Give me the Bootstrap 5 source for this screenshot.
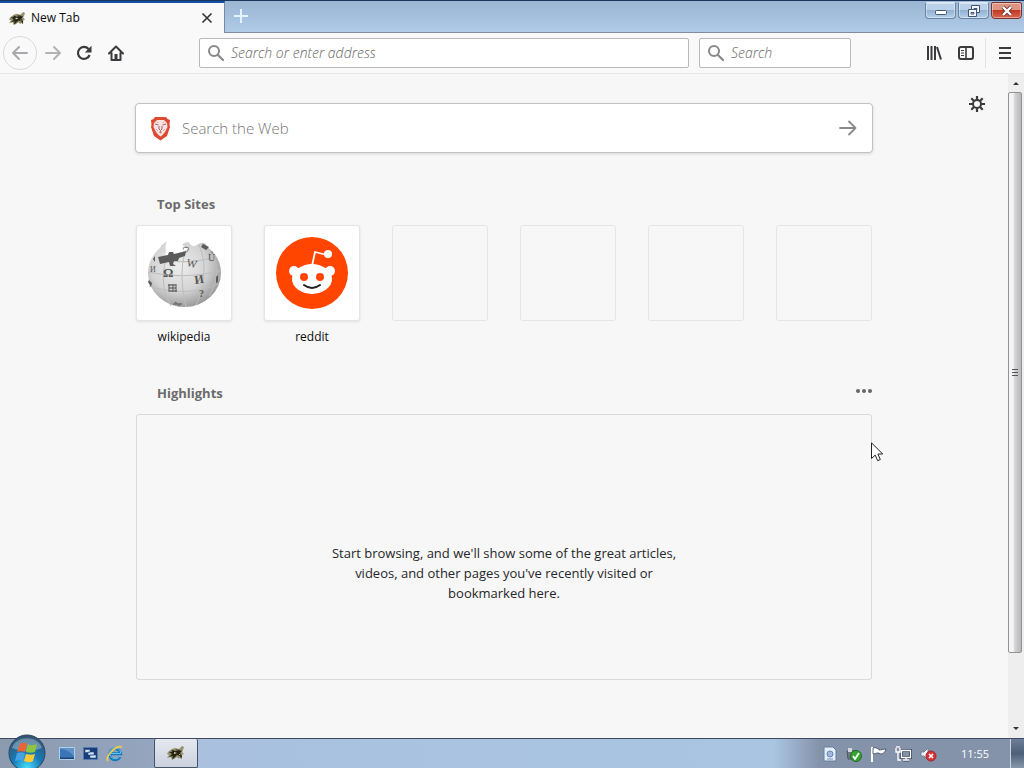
<!DOCTYPE html>
<html lang="en">
<head>
<meta charset="utf-8">
<meta name="viewport" content="width=device-width, initial-scale=1">
<title>New Tab</title>
<link href="https://cdn.jsdelivr.net/npm/bootstrap@5.3.0/dist/css/bootstrap.min.css" rel="stylesheet">
<style>
body{font-family:"Open Sans","Noto Sans",sans-serif;font-size:12px;line-height:20px;color:#0c0c0d;background:#f7f7f7}
svg{display:block;flex:none}
button,.tile-link{border:0;background:none;padding:0;color:inherit}
input::placeholder{color:#777;opacity:1}
input{border:0;background:none;outline:0;min-width:0;padding:0}
/* window frame */
.titlebar{height:33px;background:linear-gradient(#9bb5d2,#b0cce8);border-top:1px solid #1b365d}
.tab{width:225px;background:#f9f9fa;border-top:2px solid #1450a8;border-right:1px solid #7889a0;padding:0 11px 0 9px}
.tab span{padding-left:5px}
.tabspace{border-bottom:1px solid #818d9f;padding-left:9px}
.tabspace>button{align-self:flex-start;margin-top:8px}
.winbtns{gap:2px;padding:1px 2px 0 0}
.winbtn{width:31px;height:17px;border:1px solid #6784a5;border-top-color:#dcebf8;border-radius:2px 2px 4px 4px;background:linear-gradient(#b9d0e8 45%,#93b2d2 50%,#b4d0ea);box-shadow:inset 0 0 0 1px #ffffff66;display:flex;align-items:center;justify-content:center}
.winclose{background:linear-gradient(#df9482 45%,#c13b24 50%,#d9664d);border-color:#7c3030}
/* toolbar */
.toolbar{height:41px;background:#f9f9fa;border-bottom:1px solid #e6e6e7;color:#3b3b3d;padding:0 12px 0 3px}
.toolbar input{font-size:14px;font-style:italic;font-weight:300}
.toolbar input::placeholder{color:#666}
.backbtn{width:34px;height:34px;border:1px solid #d9d9da;border-radius:50%;color:#a9a9ab;display:flex;align-items:center;justify-content:center}
.fwdbtn{color:#b3b3b5;margin:0 14px 0 7px}
.field{height:30px;border:1px solid #b9b9ba;border-radius:2px;background:#fff;padding:0 7px;gap:6px;color:#888}
.urlfield{margin:0 10px 0 75px}
.searchfield{width:152px;margin-right:75px}
.tools button:nth-child(2){margin:0 11px 0 16px}
.tools .divider+button{margin-left:12px}
.divider{width:1px;height:30px;background:#e3e3e4}
/* new tab page */
.newtab{width:736px;max-width:100%;margin:0 auto}
.websearch{height:50px;margin:29px -1px 0;background:#fff;border:1px solid #c2c2c3;border-radius:4px;box-shadow:0 1px 3px #00000022;padding:0 15px 0 14px}
.websearch input{font-size:15px;font-weight:300;margin-left:11px}
h2{font-size:13px;line-height:20px;font-weight:700;color:#6b6b6c;margin:0;padding-left:21px}
.topsites{padding-top:41px}
.tiles{display:grid;grid-template-columns:repeat(6,96px);justify-content:space-between;padding-top:11px}
.tile{height:96px;border:1px solid #e5e5e6;border-radius:3px;display:flex;align-items:center;justify-content:center}
.tile-full{background:#fff;box-shadow:0 1px 3px #00000018;margin-bottom:6px}
.tile-link{color:#0c0c0d;text-align:center;text-decoration:none;font-size:12px}
.highlights{padding-top:36px}
.highlights button{padding-bottom:4px}
.empty{height:266px;border:1px solid #d9d9da;border-radius:3px;padding-top:51px;margin-top:11px}
.empty p{width:352px;font-size:13px;line-height:20px;text-align:center;margin:0;color:#26262a}
.gear{top:22px;right:23px;color:#3b3b3d}
.scroll{width:16px;background:#eeeeef;padding:1px 2px 1px 0}
.thumb{flex:563 0 0;border:1px solid #929294;border-radius:2px;background:linear-gradient(90deg,#f4f4f4 35%,#d2d2d3 50%,#b8b8ba)}
.rest{flex:67 0 0}
.pointer{left:871px;top:368px}
/* taskbar */
.taskbar{height:30px;border-top:1px solid #3d4a5f;background:linear-gradient(90deg,#8c9ab0 0,#94a5be 150px,#a9c1de 200px,#a9c5e2 calc(100% - 250px),#8593aa calc(100% - 205px),#8492aa)}
.orb{left:8px;bottom:-6px}
.quick{padding-left:59px;width:154px;gap:8px}
.task{width:44px;border:1px solid #45536a;border-top:0;border-radius:2px;background:linear-gradient(#e4e8f0,#cbd2de);display:flex;align-items:center;justify-content:center}
.tray{gap:8px;padding-right:3px}
.clock{color:#fff;width:70px;text-align:center;line-height:29px;font-size:11px}
.showdesk{width:14px;border-left:1px solid #cbd5e2;background:linear-gradient(#6d7f96,#4d6077 50%,#8797ac)}
</style>
</head>
<body class="d-flex flex-column vh-100 overflow-hidden">
<svg width="0" height="0" class="position-absolute" aria-hidden="true"><defs>
<symbol id="wasp" viewBox="0 0 18 16"><path d="M1 7 5 4l3-1 4 1 3-3 2 1-1 3-1 2 2 2-2 1v4l-2-2-1 2-2-2-3 2-2 1-1-3-4 1 2-3-2-1z" fill="#98916a"/><path d="m2 7 4-2 2 1 4-1 3 1-2 2 2 3-1 3-1-3-3-1-3 3-2 1 1-3-4 1 3-3z" fill="#25241b"/><path d="m8 4 5 1-2 1z" fill="#44402b"/><path d="m7 7 3 1-3 1zM3 6l2 0-1 1zM12 9l2 1-2 0z" fill="#ded7a2"/></symbol>
<symbol id="lens" viewBox="0 0 18 18"><circle cx="7" cy="7" r="5" fill="none" stroke="currentColor" stroke-width="2"/><path d="m11 11 5 5" stroke="currentColor" stroke-width="2.2" stroke-linecap="round"/></symbol>
</defs></svg>

<header class="titlebar d-flex flex-shrink-0">
  <div class="tab d-flex align-items-center">
    <svg width="17" height="15"><use href="#wasp"/></svg><span class="flex-grow-1">New Tab</span>
    <button aria-label="Close tab"><svg width="12" height="12" viewBox="0 0 12 12" stroke="#333" stroke-width="1.6"><path d="m1.500 1.500 9 9m0-9-9 9"/></svg></button>
  </div>
  <div class="tabspace d-flex flex-grow-1 justify-content-between">
    <button aria-label="New tab"><svg width="14" height="14" viewBox="0 0 14 14" stroke="#e4f4ff" stroke-width="2"><path d="M7 0v14M0 7h14"/></svg></button>
    <div class="winbtns d-flex">
      <button class="winbtn" aria-label="Minimize"><svg width="14" height="8" viewBox="0 0 14 8"><rect x="1.500" y="3.500" width="11" height="4" rx="1" fill="#fff" stroke="#42566f"/></svg></button>
      <button class="winbtn" aria-label="Restore"><svg width="14" height="12" viewBox="0 0 14 12" fill="#f4f8ff" stroke="#42566f"><path d="M4.500.5h8v7h-8zM7 3.500h3v1H7z"/><path d="M1.500 4.500h8v7h-8z"/><path d="M4 7.500h3v1.500H4z"/></svg></button>
      <button class="winbtn winclose" aria-label="Close window"><svg width="14" height="12" viewBox="0 0 14 12"><path d="m3 2 8 8m0-8-8 8" stroke="#6b3633" stroke-width="4"/><path d="m3 2 8 8m0-8-8 8" stroke="#fff" stroke-width="2.400"/></svg></button>
    </div>
  </div>
</header>

<nav class="toolbar d-flex flex-shrink-0 align-items-center" aria-label="Navigation">
  <button class="backbtn" aria-label="Back"><svg width="18" height="16" viewBox="0 0 18 16" fill="none" stroke="currentColor" stroke-width="2" stroke-linecap="round" stroke-linejoin="round"><path d="M16 8H2m6-6L2 8l6 6"/></svg></button>
  <button class="fwdbtn" aria-label="Forward"><svg width="18" height="16" viewBox="0 0 18 16" fill="none" stroke="currentColor" stroke-width="2" stroke-linecap="round" stroke-linejoin="round"><path d="M2 8h14m-6-6 6 6-6 6"/></svg></button>
  <button aria-label="Reload"><svg width="16" height="16" viewBox="0 0 16 16"><path d="M13.600 10A6 6 0 1 1 12.500 4" fill="none" stroke="currentColor" stroke-width="2.200"/><path d="M15.500.8v6.700H8.800z" fill="currentColor"/></svg></button>
  <button class="ms-3" aria-label="Home"><svg width="16" height="16" viewBox="0 0 16 16"><path d="M1 8.500 8 1.500l7 7M3.500 8v7h9V8" fill="none" stroke="currentColor" stroke-width="2" stroke-linecap="round" stroke-linejoin="round"/><path d="M6.500 14V9h3v5z" fill="currentColor"/></svg></button>
  <label class="field urlfield d-flex align-items-center flex-grow-1"><svg width="18" height="18"><use href="#lens"/></svg><input class="flex-grow-1" placeholder="Search or enter address" aria-label="Search or enter address"></label>
  <label class="field searchfield d-flex align-items-center"><svg width="18" height="18"><use href="#lens"/></svg><input class="flex-grow-1" placeholder="Search" aria-label="Search"></label>
  <div class="tools d-flex align-items-center">
    <button aria-label="Library"><svg width="16" height="14" viewBox="0 0 16 14" stroke="currentColor" stroke-width="2"><path d="M2 0v14M5.500 0v14M9 0v14M11 1l4 12.500"/></svg></button>
    <button aria-label="Sidebars"><svg width="16" height="14" viewBox="0 0 16 14" fill="none" stroke="currentColor"><rect x="1" y="1" width="14" height="12" rx="2" stroke-width="2"/><path d="M8 1v12" stroke-width="1.600"/><path d="M3 4.500h3M3 7h3M3 9.500h3"/></svg></button>
    <span class="divider"></span>
    <button aria-label="Menu"><svg width="14" height="14" viewBox="0 0 14 14" stroke="currentColor" stroke-width="2"><path d="M1 2h12M1 7h12M1 12h12"/></svg></button>
  </div>
</nav>

<div class="d-flex flex-grow-1 position-relative">
  <main class="flex-grow-1 position-relative">
    <button class="gear position-absolute" aria-label="Preferences"><svg width="16" height="16" viewBox="0 0 16 16" fill="none" stroke="currentColor"><circle cx="8" cy="8" r="4" stroke-width="2"/><path d="M8 0v4m0 8v4M0 8h4m8 0h4M2.300 2.300l2.900 2.900m5.600 5.600 2.900 2.900m0-11.400-2.900 2.900m-5.600 5.600-2.900 2.900" stroke-width="2.200"/></svg></button>
    <div class="newtab">
      <form class="websearch d-flex align-items-center" onsubmit="return false">
        <svg width="21" height="25" viewBox="0 0 21 25"><path d="M5 1h11l1.500 2L20 4l-.5 5 .5 2-3 9-6.500 4.500L4 20 1 11l.5-2L1 4l2.500-1z" fill="#dd4a32"/><path d="M7 4h7l3 3 .5 4-2.500 5-2.500 3-2 1.500-2-1.500L6 16l-2.500-5L4 7z" fill="#fae4e2"/><path d="m5 8 3.500 1M16 8l-3.500 1M9 10v3l1.500 1.500L12 13v-3" fill="none" stroke="#9c6170"/><path d="m7 6 1.500 1M14 6l-1.500 1M6 13l2 2m7-2-2 2" fill="none" stroke="#dfa6a0"/><path d="m9 16 1.500-1 1.500 1-1.500 1.500z" fill="#c7685e"/></svg>
        <input class="flex-grow-1" placeholder="Search the Web" aria-label="Search the Web">
        <button aria-label="Go"><svg width="18" height="16" viewBox="0 0 18 16" fill="none" stroke="#8a8a8c" stroke-width="1.800" stroke-linecap="round" stroke-linejoin="round"><path d="M1 8h15m-6-6.500L16.500 8 10 14.500"/></svg></button>
      </form>
      <section class="topsites">
        <h2>Top Sites</h2>
        <div class="tiles">
          <a class="tile-link" href="#wikipedia"><span class="tile tile-full"><svg width="76" height="76" viewBox="0 0 76 76">
            <defs><radialGradient id="globe" cx=".42" cy=".38" r=".65"><stop stop-color="#eeeeee"/><stop offset=".6" stop-color="#d3d3d3"/><stop offset="1" stop-color="#979797"/></radialGradient></defs>
            <path d="M14 13c2-4 5-5 7-7-1 3-2 6-1 10l-1 4 15-1 4-3 4-2-6-4c1-2 4-3 6-3 3 2 3 4 6 4s4-3 8-3 4 1 5 4c9 6 14 15 14 26a36.500 34 0 0 1-73 0c0-10 5-19 12-25z" fill="url(#globe)"/>
            <path d="M20 24c-5 18-3 34 5 47M39 18c-5 14-3 37 1 54M53 10c8 18 6 42-3 60M3 51c22 7 48 8 69-2M3 37c20 5 46 5 71-1M67 18c6 16 4 31-4 43M17 25c18 3 36 2 52-3" fill="none" stroke="#bdbdbd"/>
            <path d="m12 22 10-2 1-3 4 0 1 2 12-3-1 5-6 2-1 3-4 0-1 3 3 2h-6l-1-4-9 2zM57 9l6 3-3 3-5-3zM7 24l2-3v6zM3 45l3 3-1 4-3-5zM70 42l2-2v7l-2 1z" fill="#5b5b5b"/>
            <g fill="#555" font-family="Liberation Serif,serif"><text x="17" y="42" font-size="13" font-weight="700">Ω</text><text x="40" y="31" font-size="11" transform="rotate(12 40 31)">W</text><text x="49" y="49" font-size="12" font-weight="700" transform="rotate(-8 49 49)">И</text><text x="62" y="26" font-size="10">Ů</text><text x="36" y="17" font-size="8">ウ</text><text x="53" y="62" font-size="10" font-weight="700">?</text><text x="4" y="37" font-size="8">И</text></g>
            <path d="M22 50h8m-7 3h7m-7 3h8M23 49v8m4-8v8m3-8v8M27 69h9m-7-2 5 4" stroke="#707070" stroke-width="1.300"/>
          </svg></span>wikipedia</a>
          <a class="tile-link" href="#reddit"><span class="tile tile-full"><svg width="72" height="72" viewBox="0 0 72 72"><circle cx="36" cy="36" r="36" fill="#ff4500"/><path d="m36 29 3-14 12 3" fill="none" stroke="#fff" stroke-width="1.800"/><circle cx="52" cy="17" r="4" fill="#fff"/><circle cx="18" cy="34" r="5" fill="#fff"/><circle cx="54" cy="34" r="5" fill="#fff"/><ellipse cx="36" cy="42" rx="20" ry="15" fill="#fff"/><circle cx="28" cy="40" r="4" fill="#ff4500"/><circle cx="44" cy="40" r="4" fill="#ff4500"/><path d="M28 48q8 6 16 0" fill="none" stroke="#222" stroke-width="2" stroke-linecap="round"/></svg></span>reddit</a>
          <span class="tile"></span><span class="tile"></span><span class="tile"></span><span class="tile"></span>
        </div>
      </section>
      <section class="highlights">
        <div class="d-flex justify-content-between"><h2>Highlights</h2><button aria-label="Section menu"><svg width="17" height="6" viewBox="0 0 17 6" fill="#666"><circle cx="3" cy="3" r="2"/><circle cx="9" cy="3" r="2"/><circle cx="15" cy="3" r="2"/></svg></button></div>
        <div class="empty d-flex align-items-center justify-content-center"><p>Start browsing, and we'll show some of the great articles, videos, and other pages you've recently visited or bookmarked here.</p></div>
      </section>
    </div>
  </main>
  <div class="scroll d-flex flex-column" aria-hidden="true">
    <svg width="15" height="17" viewBox="0 0 15 17"><path d="m5 10 3-3 3 3z" fill="#333"/></svg>
    <div class="thumb d-flex align-items-center justify-content-center"><svg width="8" height="8" viewBox="0 0 8 8" stroke="#555"><path d="M1 .5h6M1 3.500h6M1 6.500h6"/></svg></div>
    <div class="rest"></div>
    <svg width="15" height="17" viewBox="0 0 15 17"><path d="m5 7 3 3 3-3z" fill="#333"/></svg>
  </div>
  <svg class="pointer position-absolute" width="13" height="20" viewBox="0 0 13 20"><path d="M.5.800v15.700l3.700-3.400 2.500 5.600 2.600-1.200L6.900 12h4.800z" fill="#fff" stroke="#222"/></svg>
</div>

<footer class="taskbar d-flex flex-shrink-0 position-relative">
  <button class="orb position-absolute" aria-label="Start"><svg width="38" height="40" viewBox="0 0 38 40">
    <defs><radialGradient id="orb" cx=".5" cy=".9" r=".9"><stop stop-color="#48dcff"/><stop offset=".45" stop-color="#1779b4"/><stop offset="1" stop-color="#38516e"/></radialGradient></defs>
    <circle cx="19" cy="19" r="18" fill="url(#orb)" stroke="#294661"/><path d="M4 14C8 1 30 1 34 14c-10 4-20 4-30 0z" fill="#fff" opacity=".3"/>
    <path d="M12 10c3-2 5-1 7 0l-2 8c-3-1-5-1-8 0z" fill="#ed6433"/><path d="M20 10c3 2 6 1 9 0l-2 8c-3 1-6 1-9 0z" fill="#8cc63f"/><path d="M9 19c3-1 5-1 8 0l-2 8c-2-1-5-1-8 0z" fill="#45a2e5"/><path d="M18 20c3 1 6 1 9 0l-2 7c-3 2-6 1-9 0z" fill="#ffc936"/></svg></button>
  <div class="quick d-flex align-items-center">
    <button aria-label="Show desktop"><svg width="16" height="13" viewBox="0 0 16 13"><path d="M.5.5h15v12H.5z" fill="#3876b9" stroke="#a8d1ed"/><path d="M1 2c5 0 9 2 14 7V1H1z" fill="#6291c8"/><path d="M1 10.500h14v1.500H1z" fill="#243f70"/></svg></button>
    <button aria-label="Switch windows"><svg width="15" height="13" viewBox="0 0 15 13"><path d="M.5.5h14v12H.5z" fill="#173c77" stroke="#527cae"/><path d="M2 2.500h5v3H2zM5 5h6v3H5zM7 8h6v3H7z" fill="#d5e7f7" stroke="#254e87" stroke-width=".6"/></svg></button>
    <button aria-label="Internet Explorer"><svg width="17" height="17" viewBox="0 0 17 17" fill="none"><path d="M14 12a5.500 5.500 0 1 1 .7-3.300H5" stroke="#1677bd" stroke-width="3"/><path d="M14 11a5.500 5.500 0 1 1 .7-2.500H5" stroke="#5bc5ee"/><path d="M2 16C-1 12 9 0 16 2" stroke="#f0c94c" stroke-width="1.800"/></svg></button>
  </div>
  <button class="task" aria-label="New Tab"><svg width="18" height="16"><use href="#wasp"/></svg></button>
  <div class="ms-auto d-flex align-items-center tray">
    <svg width="14" height="16" viewBox="0 0 14 16"><path d="M1 1h9l3 3v11H1z" fill="#e4eefb" stroke="#647c9f"/><circle cx="7" cy="8" r="3" fill="#9fb8dc" stroke="#6586b5"/><path d="M4 13h6" stroke="#7792b7"/></svg>
    <svg width="17" height="16" viewBox="0 0 17 16"><path d="M2 5h9v8H3z" fill="#727984" stroke="#4d5460"/><path d="M3 2h4v4H3z" fill="#d2d8df"/><circle cx="11" cy="10" r="5.500" fill="#35a52f" stroke="#1e6f26"/><path d="m8 10 2 3 4-6" fill="none" stroke="#fff" stroke-width="1.800"/></svg>
    <svg width="17" height="16" viewBox="0 0 17 16"><path d="M2 1v15" stroke="#fff" stroke-width="2"/><path d="M3 2c4-1 4 1 6 1v1c2 0 4-1 7-1-1 3-2 5-6 5l-1-1C7 7 7 7 3 8z" fill="#fff" stroke="#39465a" stroke-width=".8"/></svg>
    <svg width="17" height="16" viewBox="0 0 17 16" fill="none"><path d="M6.500 4.500h9v7h-9zM8 14h6m-3-2v2" stroke="#39465a" stroke-width="3"/><path d="M6.500 4.500h9v7h-9zM8 14h6m-3-2v2M1 2v4h4V2M3 6v8h3M2 0v2m2-2v2" stroke="#fff" stroke-width="1.300"/></svg>
    <svg width="17" height="16" viewBox="0 0 17 16"><path d="M1 6h3l4-4v12l-4-4H1z" fill="#f4f7fb" stroke="#728198"/><circle cx="11" cy="10" r="5" fill="#d53535" stroke="#a82328"/><path d="m9 8 4 4m0-4-4 4" stroke="#fff" stroke-width="1.600"/></svg>
  </div>
  <time class="clock">11:55</time>
  <button class="showdesk" aria-label="Show desktop"></button>
</footer>
<script src="https://cdn.jsdelivr.net/npm/bootstrap@5.3.0/dist/js/bootstrap.bundle.min.js"></script>
</body>
</html>
